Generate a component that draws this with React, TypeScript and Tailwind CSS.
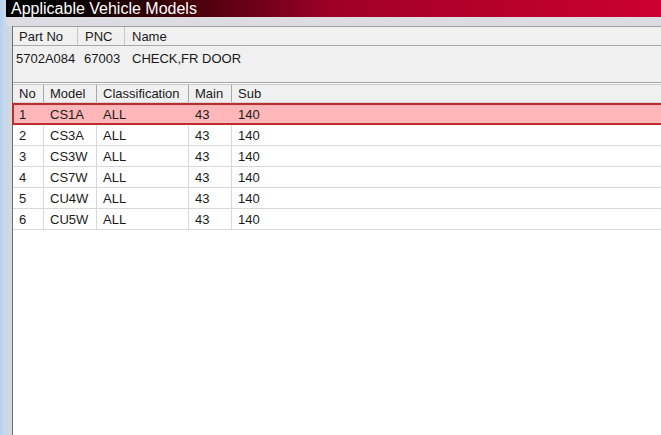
import React from "react";

const ROWS = [
  { no: "1", model: "CS1A", cls: "ALL", main: "43", sub: "140" },
  { no: "2", model: "CS3A", cls: "ALL", main: "43", sub: "140" },
  { no: "3", model: "CS3W", cls: "ALL", main: "43", sub: "140" },
  { no: "4", model: "CS7W", cls: "ALL", main: "43", sub: "140" },
  { no: "5", model: "CU4W", cls: "ALL", main: "43", sub: "140" },
  { no: "6", model: "CU5W", cls: "ALL", main: "43", sub: "140" },
];

// column widths of the model grid
const COLS = ["w-[31px]", "w-[53px]", "w-[92px]", "w-[43px]", "flex-1"];

export default function App() {
  return (
    <div
      className="w-[661px] h-[435px] flex overflow-hidden bg-white text-[13px] text-[#1a1a1a]"
      style={{ fontFamily: '"Liberation Sans", Arial, sans-serif' }}
    >
      {/* window frame edge */}
      <div className="w-[6px] h-full bg-gradient-to-r from-[#b7d1ec] to-[#c9dcef]" />

      <div className="flex-1 flex flex-col min-w-0">
        {/* title bar */}
        <div className="h-[17px] flex items-center pl-[5px] bg-gradient-to-r from-[#000000] via-[#a00026] via-50% to-[#cc0033]">
          <span className="text-white text-[16px] leading-none">Applicable Vehicle Models</span>
        </div>
        <div className="h-[9px] bg-[#dcdce2]" />

        <div className="flex-1 flex min-h-0">
          <div className="w-[6px] bg-gradient-to-r from-[#c8d6e6] to-[#d9d9d9]" />

          <div className="flex-1 flex flex-col border-l border-[#6e6e6e] min-w-0">
            {/* part info */}
            <div className="h-[57px] bg-[#f0f0f0] border-t border-[#a0a0a0] border-b border-b-[#a0a0a0] flex flex-col">
              <div className="h-[19px] flex border-b border-[#a8a8a8]">
                <div className="w-[65px] pl-[6px] pt-[2px] flex items-center border-r border-[#c8c8c8]">Part No</div>
                <div className="w-[47px] pl-[7px] pt-[2px] flex items-center border-r border-[#c8c8c8]">PNC</div>
                <div className="flex-1 pl-[7px] pt-[2px] flex items-center">Name</div>
              </div>
              <div className="flex pt-[3px]">
                <div className="w-[65px] pl-[3px]">5702A084</div>
                <div className="w-[47px] pl-[6px]">67003</div>
                <div className="flex-1 pl-[7px]">CHECK,FR DOOR</div>
              </div>
            </div>

            {/* model grid */}
            <div className="flex-1 bg-white border-t border-white">
              <div className="h-[19px] flex bg-[#f0f0f0] border-t border-[#c8c8c8] border-b border-b-[#d4d4d4]">
                {["No", "Model", "Classification", "Main", "Sub"].map((h, i) => (
                  <div key={h} className={`${COLS[i]} pl-[6px] pt-px flex items-center ${i < 4 ? "border-r border-[#a8a8a8]" : ""}`}>
                    {h}
                  </div>
                ))}
              </div>
              {ROWS.map((r, idx) => {
                const sel = idx === 0;
                const cells = [r.no, r.model, r.cls, r.main, r.sub];
                return (
                  <div
                    key={r.no}
                    className={
                      sel
                        ? "h-[22px] flex bg-[#ffb7b9] shadow-[inset_0_0_0_2px_#bd2d2f] -ml-px -mr-[4px]"
                        : "h-[21px] flex border-b border-[#d8d8d8]"
                    }
                  >
                    {cells.map((c, i) => (
                      <div
                        key={i}
                        className={`${COLS[i]} ${sel && i === 0 ? "w-[32px] pl-[7px]" : "pl-[6px]"} pt-px flex items-center ${
                          i < 4 && !sel ? "border-r border-[#d8d8d8]" : ""
                        }`}
                      >
                        {c}
                      </div>
                    ))}
                  </div>
                );
              })}
            </div>
          </div>
        </div>
      </div>
    </div>
  );
}
